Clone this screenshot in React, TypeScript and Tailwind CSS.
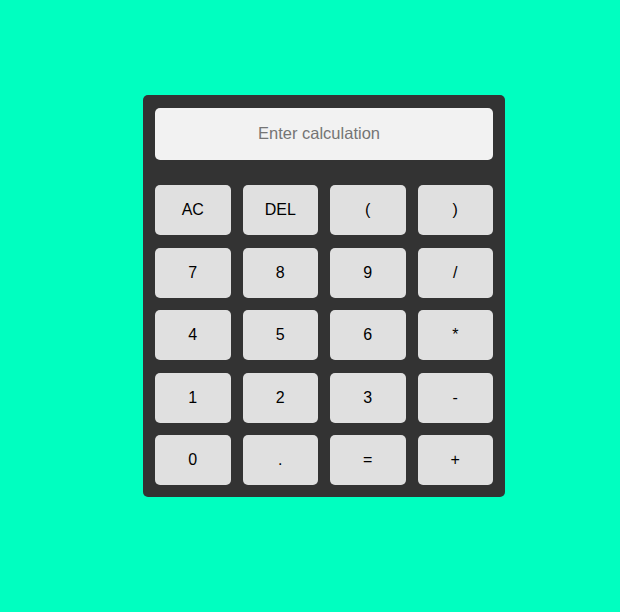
export default function App() {
  const keys = ["AC", "DEL", "(", ")", "7", "8", "9", "/", "4", "5", "6", "*", "1", "2", "3", "-", "0", ".", "=", "+"];
  return (
    <div className="w-[620px] h-[612px] bg-[#00ffc0] flex items-start pl-[143px] pt-[95px]" style={{ fontFamily: '"Liberation Sans", Arial, sans-serif' }}>
      <div className="w-[362px] h-[402px] bg-[#333333] rounded-[5px] pt-[13px] px-3 pb-3 flex flex-col">
        <input
          placeholder="Enter calculation"
          className="w-full h-[52px] bg-[#f2f2f2] rounded-[5px] pr-[10px] pb-[1px] text-center text-[16.5px] placeholder:text-[#757575] outline-none"
        />
        <div className="mt-[25px] grid grid-cols-4 gap-x-3 gap-y-[12.5px]">
          {keys.map((k) => (
            <button key={k} className="h-[50px] bg-[#e0e0e0] rounded-[5px] text-[16px] text-black flex items-center justify-center">
              {k}
            </button>
          ))}
        </div>
      </div>
    </div>
  );
}
